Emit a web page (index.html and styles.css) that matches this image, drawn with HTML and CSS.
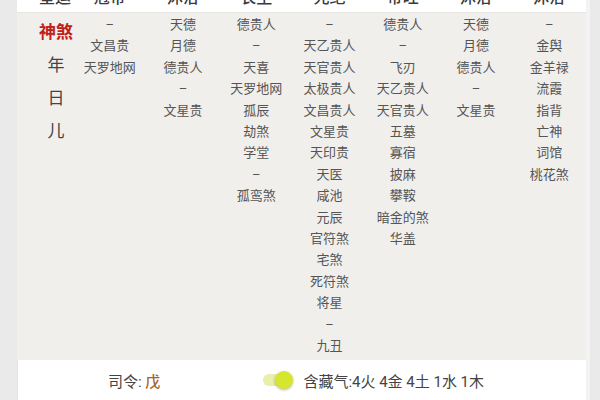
FILE: index.html
```html
<!DOCTYPE html>
<html lang="zh">
<head>
<meta charset="utf-8">
<link rel="stylesheet" href="styles.css">
</head>
<body>
<div class="panel">
  <div class="head">
    <span>星运</span><span>冠带</span><span>沐浴</span><span>长生</span><span>死绝</span><span>帝旺</span><span>沐浴</span><span>沐浴</span>
  </div>
  <div class="grid">
    <div class="label">
      <div class="red">神煞</div>
      <div>年</div>
      <div>日</div>
      <div>儿</div>
    </div>
    <div class="col"><div>–</div><div>文昌贵</div><div>天罗地网</div></div>
    <div class="col"><div>天德</div><div>月德</div><div>德贵人</div><div>–</div><div>文星贵</div></div>
    <div class="col"><div>德贵人</div><div>–</div><div>天喜</div><div>天罗地网</div><div>孤辰</div><div>劫煞</div><div>学堂</div><div>–</div><div>孤鸾煞</div></div>
    <div class="col"><div>–</div><div>天乙贵人</div><div>天官贵人</div><div>太极贵人</div><div>文昌贵人</div><div>文星贵</div><div>天印贵</div><div>天医</div><div>咸池</div><div>元辰</div><div>官符煞</div><div>宅煞</div><div>死符煞</div><div>将星</div><div>–</div><div>九丑</div></div>
    <div class="col"><div>德贵人</div><div>–</div><div>飞刃</div><div>天乙贵人</div><div>天官贵人</div><div>五墓</div><div>寡宿</div><div>披麻</div><div>攀鞍</div><div>暗金的煞</div><div>华盖</div></div>
    <div class="col"><div>天德</div><div>月德</div><div>德贵人</div><div>–</div><div>文星贵</div></div>
    <div class="col"><div>–</div><div>金舆</div><div>金羊禄</div><div>流霞</div><div>指背</div><div>亡神</div><div>词馆</div><div>桃花煞</div></div>
  </div>
  <div class="foot">
    <div class="siling">司令: <span class="wu">戊</span></div>
    <div class="toggle"><span class="track"></span><span class="knob"></span></div>
    <div class="qi">含藏气:4火 4金 4土 1水 1木</div>
  </div>
</div>
</body>
</html>
```
FILE: styles.css
```css
html, body {
  margin: 0;
  padding: 0;
  background: #eaeaea;
  font-family: Roboto, "Noto Sans CJK SC", sans-serif;
  height: 400px;
  overflow: hidden;
}
.panel {
  margin-left: 17px;
  width: 569px;
  border-right: 4px solid #f3f3f3;
}
.head {
  height: 12px;
  overflow: hidden;
  background: #fff;
  display: grid;
  grid-template-columns: 56px repeat(7, 1fr);
  grid-template-rows: 12px;
  align-items: start;
  border-bottom: 1px solid #e8e6e3;
}
.head span {
  font-size: 16px;
  line-height: 16px;
  margin-top: -10px;
  text-align: center;
  color: #3a3a3a;
  font-weight: 500;
}
.head span:first-child {
  padding-left: 22px;
  text-align: left;
}
.grid {
  background: #f1efec;
  display: grid;
  grid-template-columns: 56px repeat(7, 1fr);
  height: 347px;
  box-sizing: border-box;
}
.label {
  padding-top: 3px;
  padding-left: 22px;
  font-size: 17px;
  line-height: 33px;
  color: #444;
  text-align: center;
  width: 34px;
}
.label .red {
  color: #c0201a;
  font-weight: bold;
}
.col {
  padding-top: 1px;
  font-size: 13px;
  line-height: 21.4px;
  color: #555;
  text-align: center;
  white-space: nowrap;
}
.foot {
  height: 40px;
  background: #fff;
  display: flex;
  align-items: center;
  padding-left: 90px;
  font-size: 15px;
  color: #444;
  border-left: 1px solid #e4e4e4;
  box-sizing: border-box;
}
.wu {
  color: #a8641f;
  font-weight: 500;
}
.toggle {
  position: relative;
  width: 30px;
  height: 20px;
  margin-left: 103px;
  margin-right: 10px;
}
.track {
  position: absolute;
  left: 0;
  top: 4px;
  width: 26px;
  height: 12px;
  border-radius: 6px;
  background: #e7efaa;
}
.knob {
  position: absolute;
  left: 12px;
  top: 1px;
  width: 18px;
  height: 18px;
  border-radius: 50%;
  background: #d5e62c;
  box-shadow: 0 1px 3px rgba(0,0,0,0.3);
}
```
